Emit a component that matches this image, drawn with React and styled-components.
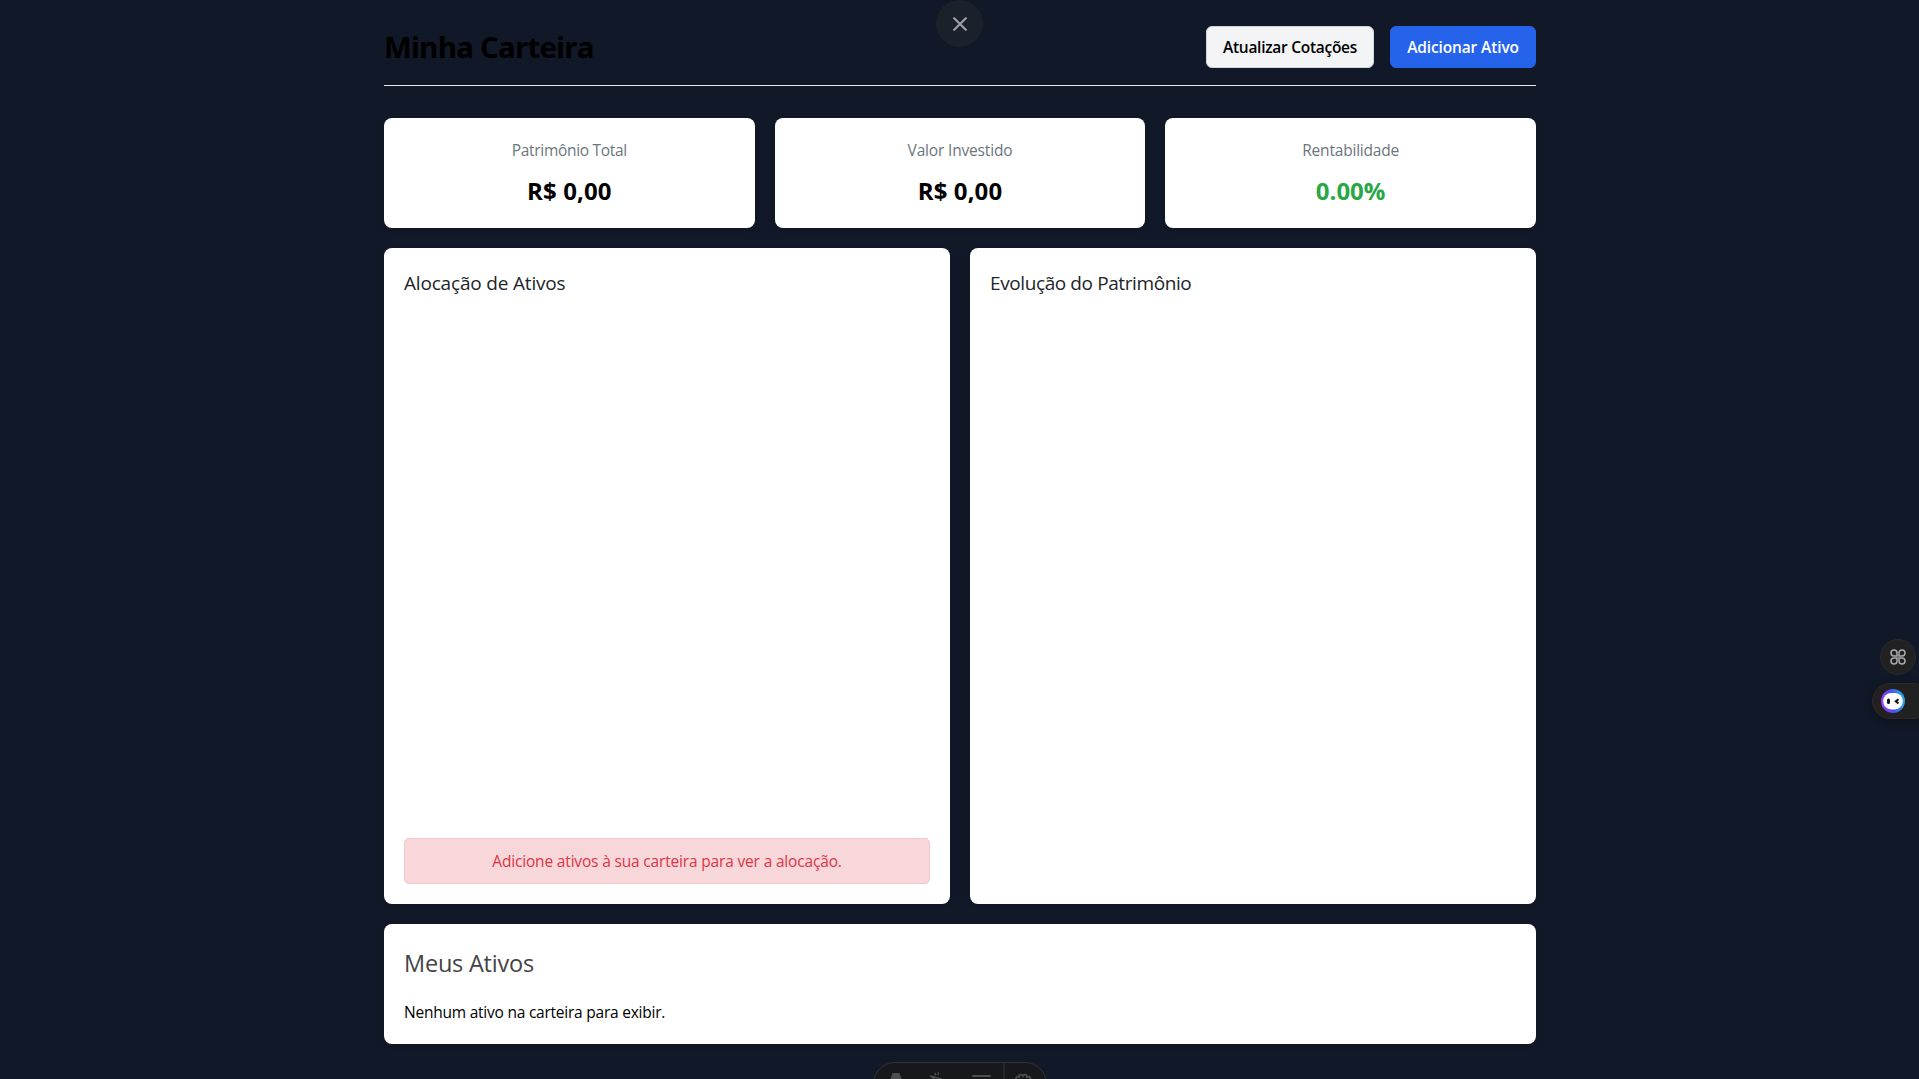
import React from "react";
import styled, { createGlobalStyle } from "styled-components";

const GlobalStyle = createGlobalStyle`
  * { box-sizing: border-box; }
  html, body { margin: 0; height: 100%; overflow: hidden; }
  body {
    background: #111827;
    font-family: "Open Sans", "Noto Sans", sans-serif;
    font-size: 15.5px;
    line-height: 24px;
    color: #000;
  }
  h1, h2, h3, p { margin: 0; }
`;

const Page = styled.main`
  width: 1152px;
  margin: 0 auto;
  padding-top: 26px;
  position: relative;
  left: 0.5px;
`;

const Header = styled.header`
  display: flex;
  justify-content: space-between;
  align-items: center;
  padding-bottom: 17px;
  border-bottom: 1px solid #e5e7eb;
  margin-bottom: 32px;
`;

const Title = styled.h1`
  font-size: 29.4px;
  line-height: 36px;
  font-weight: 700;
  letter-spacing: -0.78px;
`;

const Actions = styled.div`
  display: flex;
  gap: 16px;
`;

const Button = styled.button`
  width: ${(p) => (p.$primary ? 146 : 168)}px;
  height: 42px;
  padding: 0;
  border-radius: 6px;
  border: 1px solid ${(p) => (p.$primary ? "#2563eb" : "#d1d5db")};
  background: ${(p) => (p.$primary ? "#2563eb" : "#f3f4f6")};
  color: ${(p) => (p.$primary ? "#fff" : "#000")};
  font: 600 15.5px/24px "Open Sans", sans-serif;
  letter-spacing: ${(p) => (p.$primary ? -0.13 : -0.28)}px;
  white-space: nowrap;
`;

const Grid = styled.section`
  display: grid;
  grid-template-columns: repeat(${(p) => p.$cols}, 1fr);
  gap: 20px;
  margin-bottom: 20px;
`;

const Card = styled.article`
  background: #fff;
  border-radius: 8px;
  padding: 20px;
  height: ${(p) => p.$height}px;
  display: flex;
  flex-direction: column;
  align-items: ${(p) => (p.$center ? "center" : "stretch")};
  box-shadow: 0 2px 4px rgba(0, 0, 0, 0.1);
`;

const StatLabel = styled.h3`
  font-size: 15.5px;
  line-height: 25px;
  font-weight: 400;
  color: #6c757d;
  letter-spacing: ${(p) => p.$track}px;
  margin-bottom: 10px;
`;

const StatValue = styled.p`
  font-size: 24px;
  line-height: 36px;
  font-weight: 700;
  letter-spacing: ${(p) => p.$track || 0}px;
  color: ${(p) => p.$color || "#000"};
`;

const ChartTitle = styled.h3`
  font-size: 19px;
  line-height: 30px;
  font-weight: 400;
  color: #212529;
  letter-spacing: ${(p) => p.$track}px;
`;

const Alert = styled.p`
  margin-top: auto;
  padding: 10px;
  border: 1px solid #f5c6cb;
  border-radius: 5px;
  background: #f8d7da;
  color: #dc3545;
  text-align: center;
  letter-spacing: -0.17px;
`;

const SectionTitle = styled.h2`
  font-size: 23.5px;
  line-height: 38px;
  font-weight: 400;
  color: #444;
  letter-spacing: -0.22px;
  margin-bottom: 18px;
`;

const EmptyText = styled.p`
  letter-spacing: -0.23px;
`;

const Close = styled.button`
  position: fixed;
  top: 0;
  left: 936px;
  width: 47px;
  height: 47px;
  padding: 0;
  border: 0;
  border-radius: 50%;
  background: #1b212b;
  display: grid;
  place-items: center;
`;

const RoundTool = styled.button`
  position: fixed;
  left: 1880px;
  top: 639px;
  width: 36px;
  height: 36px;
  padding: 0;
  border: 1px solid #2a2a2b;
  border-radius: 50%;
  background: #212121;
  display: grid;
  place-items: center;
`;

const Assistant = styled.div`
  position: fixed;
  left: 1872px;
  top: 683px;
  width: 60px;
  height: 36px;
  padding: 5px 0 0 8px;
  border: 1px solid #2a2a2b;
  border-radius: 18px;
  background: #212121;
  box-shadow: 0 2px 8px rgba(0, 0, 0, 0.35);
`;

const Toolbar = styled.div`
  position: fixed;
  left: 873px;
  top: 1062px;
  width: 174px;
  height: 44px;
  border: 1px solid #30343a;
  border-radius: 22px;
  background: #16181c;
  overflow: hidden;
`;

const Drawing = styled.svg`
  display: block;
`;

export default function App() {
  return (
    <>
      <GlobalStyle />
      <Page>
        <Header>
          <Title>Minha Carteira</Title>
          <Actions>
            <Button>Atualizar Cotações</Button>
            <Button $primary>Adicionar Ativo</Button>
          </Actions>
        </Header>
        <Grid $cols={3}>
          <Card $height={110} $center>
            <StatLabel $track={-0.3}>Patrimônio Total</StatLabel>
            <StatValue $track={0.1}>R$ 0,00</StatValue>
          </Card>
          <Card $height={110} $center>
            <StatLabel $track={-0.17}>Valor Investido</StatLabel>
            <StatValue $track={0.1}>R$ 0,00</StatValue>
          </Card>
          <Card $height={110} $center>
            <StatLabel $track={-0.2}>Rentabilidade</StatLabel>
            <StatValue $color="#28a745">0.00%</StatValue>
          </Card>
        </Grid>
        <Grid $cols={2}>
          <Card $height={656}>
            <ChartTitle $track={-0.18}>Alocação de Ativos</ChartTitle>
            <Alert>Adicione ativos à sua carteira para ver a alocação.</Alert>
          </Card>
          <Card $height={656}>
            <ChartTitle $track={-0.4}>Evolução do Patrimônio</ChartTitle>
          </Card>
        </Grid>
        <Card $height={120}>
          <SectionTitle>Meus Ativos</SectionTitle>
          <EmptyText>Nenhum ativo na carteira para exibir.</EmptyText>
        </Card>
      </Page>

      <Close aria-label="Fechar">
        <Drawing width="14" height="14" viewBox="0 0 14 14">
          <path d="M1.2 1.2 12.8 12.8M12.8 1.2 1.2 12.8" stroke="#9c9ca4" strokeWidth="2.2" strokeLinecap="round" />
        </Drawing>
      </Close>

      <RoundTool aria-label="Ferramentas">
        <Drawing width="16" height="16" viewBox="0 0 16 16" fill="none" stroke="#a9a9ae" strokeWidth="1.5">
          <path d="M7 7H4a3 3 0 1 1 3-3zM9 7V4a3 3 0 1 1 3 3zM7 9v3a3 3 0 1 1-3-3zM9 9h3a3 3 0 1 1-3 3z" />
        </Drawing>
      </RoundTool>

      <Assistant>
        <Drawing width="24" height="24" viewBox="0 0 24 24">
          <defs>
            <linearGradient id="ring" x1="0" y1="0.7" x2="1" y2="0.5">
              <stop offset="0" stopColor="#a83cf0" />
              <stop offset="0.45" stopColor="#4b4df5" />
              <stop offset="1" stopColor="#28a5e0" />
            </linearGradient>
          </defs>
          <circle cx="12" cy="12" r="12" fill="url(#ring)" />
          <rect x="2.2" y="4" width="19.6" height="16.4" rx="8" fill="#fff" />
          <rect x="6" y="9.5" width="3" height="5.5" rx="1.5" fill="#111" />
          <path d="M17.5 10.2 14.8 12.3 17.5 14.4" stroke="#111" strokeWidth="2" fill="none" />
        </Drawing>
      </Assistant>

      <Toolbar>
        <Drawing width="172" height="20" viewBox="874 1063 172 20" fill="none" stroke="#4d4e52" strokeWidth="1.8" strokeLinecap="round">
          <path d="M890.5 1080c1-3 1-7 3-7h5c2 0 2 4 3.5 7z" fill="#4d4e52" stroke="none" />
          <path d="M930.5 1076l10.5 3M931.5 1077l4 3M935 1073.4l.6 1.2M938.4 1073l-.4 1.4" strokeWidth="1.5" />
          <path d="M973 1076h17" strokeWidth="2" />
          <path d="M1016 1079c0-2 1-3 3-2 0-3 3-3 4-1 1-2 4-2 4 1 2-1 4 0 3 2" />
          <path d="M1004 1063v20" stroke="#30343a" strokeWidth="1" />
        </Drawing>
      </Toolbar>
    </>
  );
}
